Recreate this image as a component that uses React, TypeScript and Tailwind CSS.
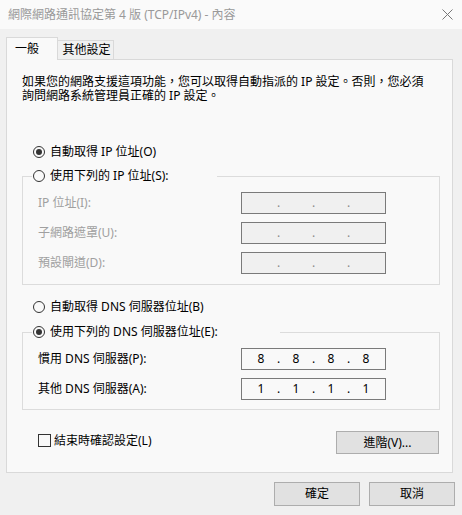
import { Fragment } from 'react';

const disabledText = 'text-[#a0a0a0]';

function Radio({ checked, label }: { checked?: boolean; label: string }) {
  return (
    <div className="flex h-4 items-center gap-[5px]">
      <span className="flex h-[12px] w-[12px] items-center justify-center rounded-full border border-[#333333] bg-[#f9f9f9]">
        {checked && <span className="h-[6px] w-[6px] rounded-full bg-[#333333]" />}
      </span>
      <span>{label}</span>
    </div>
  );
}

function IpBox({ values, disabled }: { values?: string[]; disabled?: boolean }) {
  return (
    <div
      className={`flex h-[22px] w-[145px] items-center border border-[#7a7a7a] pl-[5px] ${
        disabled ? 'bg-[#f0f0f0] text-[#8a8a8a]' : 'bg-[#f9f9f9] text-black'
      }`}
    >
      {[0, 1, 2, 3].map((i) => (
        <Fragment key={i}>
          {i > 0 && <span className="w-[7px] text-center">.</span>}
          <span className="w-[28px] text-center">{values ? values[i] : ''}</span>
        </Fragment>
      ))}
    </div>
  );
}

function FieldRow({ label, values, disabled }: { label: string; values?: string[]; disabled?: boolean }) {
  return (
    <div className="flex h-[22px] items-center">
      <span className={`ml-[15px] w-[203px] ${disabled ? disabledText : ''}`}>{label}</span>
      <IpBox values={values} disabled={disabled} />
    </div>
  );
}

function Button({ label, className }: { label: string; className: string }) {
  return (
    <div className={`flex items-center justify-center border border-[#adadad] bg-[#e1e1e1] ${className}`}>
      {label}
    </div>
  );
}

export default function App() {
  return (
    <div className="h-[515px] w-[462px] overflow-hidden bg-[#f0f0f0] font-['Noto_Sans','Noto_Sans_CJK_TC',sans-serif] text-[12px] leading-[16px] text-black">
      {/* Title bar */}
      <div className="flex h-[29px] items-center justify-between bg-[#fafafa] pl-[8px] pr-[9px]">
        <span className="text-[#999999]">網際網路通訊協定第 4 版 (TCP/IPv4) - 內容</span>
        <svg width="11" height="11" viewBox="0 0 11 11" className="text-[#777777]">
          <path d="M0.5 0.5 L10.5 10.5 M10.5 0.5 L0.5 10.5" stroke="currentColor" strokeWidth="1" fill="none" />
        </svg>
      </div>

      {/* Tabs */}
      <div className="flex items-end pl-[6px] pt-[8px]">
        <div className="relative z-10 -mb-px flex h-[23px] w-[52px] items-center border-x border-t border-[#d9d9d9] bg-[#f9f9f9] pl-[8px]">
          一般
        </div>
        <div className="flex h-[19px] w-[56px] items-center justify-center border-r border-t border-[#d9d9d9] bg-[#f0f0f0] pl-[2px]">
          其他設定
        </div>
      </div>

      {/* Tab page */}
      <div className="mx-[6px] box-border h-[414px] w-[447px] border border-[#d9d9d9] bg-[#f9f9f9]">
        <p className="ml-[15px] mt-[15px] leading-[14px]">
          如果您的網路支援這項功能，您可以取得自動指派的 IP 設定。否則，您必須
          <br />
          詢問網路系統管理員正確的 IP 設定。
        </p>

        <div className="ml-[26px] mt-[41px]">
          <Radio checked label="自動取得 IP 位址(O)" />
        </div>

        <fieldset className="ml-[15px] mt-[8px] box-border w-[418px] border border-[#dcdcdc] pb-[10px]">
          <legend className="ml-[9px] w-[185px] pl-[1px]">
            <Radio label="使用下列的 IP 位址(S):" />
          </legend>
          <div className="mt-[8px] flex flex-col gap-[8px]">
            <FieldRow label="IP 位址(I):" disabled />
            <FieldRow label="子網路遮罩(U):" disabled />
            <FieldRow label="預設閘道(D):" disabled />
          </div>
        </fieldset>

        <div className="ml-[26px] mt-[14px]">
          <Radio label="自動取得 DNS 伺服器位址(B)" />
        </div>

        <fieldset className="ml-[15px] mt-[9px] box-border w-[418px] border border-[#dcdcdc] pb-[9px]">
          <legend className="ml-[9px] w-[248px] pl-[1px]">
            <Radio checked label="使用下列的 DNS 伺服器位址(E):" />
          </legend>
          <div className="mt-[8px] flex flex-col gap-[8px]">
            <FieldRow label="慣用 DNS 伺服器(P):" values={['8', '8', '8', '8']} />
            <FieldRow label="其他 DNS 伺服器(A):" values={['1', '1', '1', '1']} />
          </div>
        </fieldset>

        <div className="mt-[21px] flex items-center justify-between pl-[31px] pr-[13px]">
          <div className="-mt-[4px] flex items-center gap-[3px]">
            <span className="h-[13px] w-[13px] border border-[#333333] bg-[#f9f9f9]" />
            <span>結束時確認設定(L)</span>
          </div>
          <Button label="進階(V)..." className="h-[23px] w-[103px]" />
        </div>
      </div>

      {/* Dialog buttons */}
      <div className="mt-[9px] flex justify-end gap-[9px] pr-[7px]">
        <Button label="確定" className="h-[24px] w-[86px]" />
        <Button label="取消" className="h-[24px] w-[86px]" />
      </div>
    </div>
  );
}
